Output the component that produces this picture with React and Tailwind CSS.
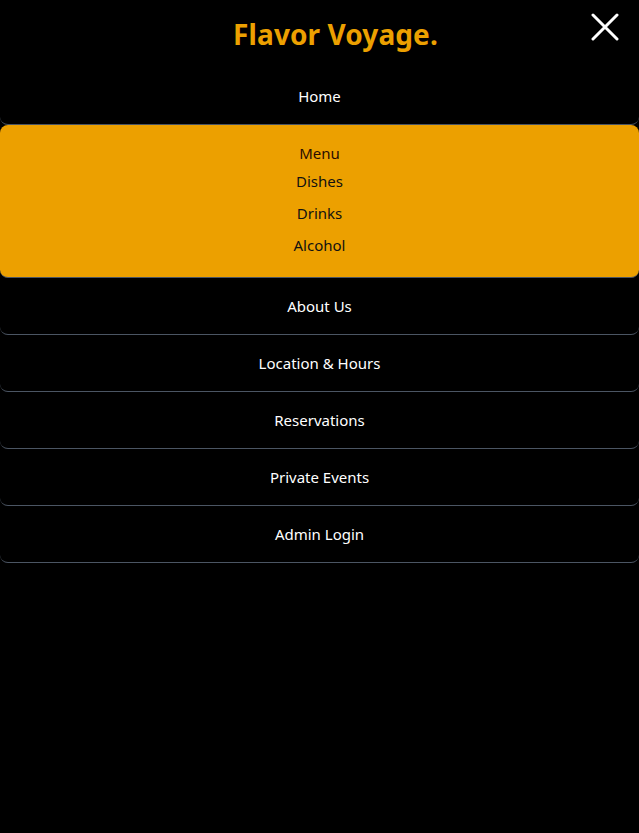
const LINKS = ["About Us", "Location & Hours", "Reservations", "Private Events", "Admin Login"];
const SUB = ["Dishes", "Drinks", "Alcohol"];

function NavRow({ label }) {
  return (
    <a className="flex h-[57px] items-center justify-center rounded-lg border-b border-[#4b5563] text-[15px] text-white">
      {label}
    </a>
  );
}

export default function App() {
  return (
    <div
      className="min-h-[833px] w-full bg-black"
      style={{ fontFamily: '"Noto Sans", "Open Sans", sans-serif' }}
    >
      {/* Header */}
      <div className="relative flex h-[68px] items-center justify-center">
        <h1 className="ml-[32px] pb-[1px] text-[28px] font-bold tracking-[0.1px] text-[#eca000]">Flavor Voyage.</h1>
        <button className="absolute right-[20px] top-[13px] text-white">
          <svg width="28" height="28" viewBox="0 0 28 28" fill="none" stroke="currentColor" strokeWidth="3" strokeLinecap="round">
            <path d="M2 2 L26 26 M26 2 L2 26" />
          </svg>
        </button>
      </div>

      <nav className="flex flex-col">
        <NavRow label="Home" />
        <div className="flex flex-col items-center rounded-lg border-b border-[#4b5563] bg-[#eca000] pt-[18px] pb-[22px] text-[15px]">
          <span className="leading-[20px] text-[#2a0d00]">Menu</span>
          <div className="mt-[8px] flex flex-col items-center gap-[12px]">
            {SUB.map((s) => (
              <span key={s} className="leading-[20px] text-[#111]">
                {s}
              </span>
            ))}
          </div>
        </div>
        {LINKS.map((l) => (
          <NavRow key={l} label={l} />
        ))}
      </nav>
    </div>
  );
}
